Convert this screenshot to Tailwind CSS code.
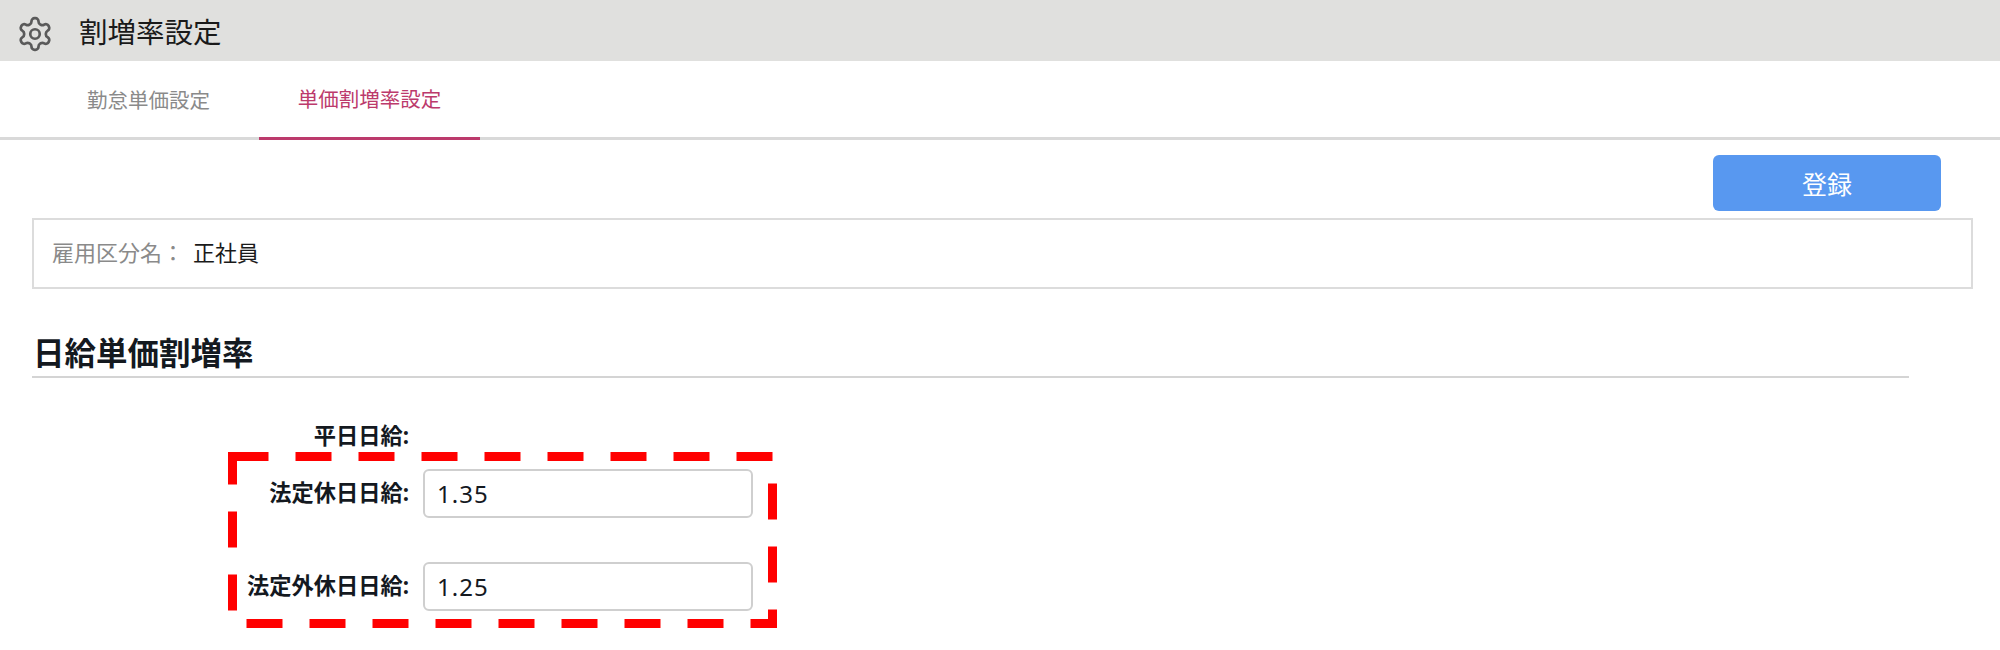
<!DOCTYPE html>
<html lang="ja">
<head>
    <meta charset="UTF-8">
    <title>割増率設定</title>
    <script src="https://cdn.jsdelivr.net/npm/@tailwindcss/browser@4"></script>
</head>
<body class="relative h-[650px] w-[2000px] overflow-hidden bg-white font-['Noto_Sans','Noto_Sans_CJK_JP',sans-serif]">

    <!-- Header -->
    <div class="flex h-[61px] items-center bg-[#e0e0de] pl-[16px]">
        <svg class="mt-[6px] h-[38px] w-[38px] text-[#5a5a5a]" viewBox="0 0 24 24" fill="none" stroke="currentColor" stroke-width="1.7" stroke-linecap="round" stroke-linejoin="round">
            <path d="M12.22 2h-.44a2 2 0 0 0-2 2v.18a2 2 0 0 1-1 1.73l-.43.25a2 2 0 0 1-2 0l-.15-.08a2 2 0 0 0-2.73.73l-.22.38a2 2 0 0 0 .73 2.73l.15.1a2 2 0 0 1 1 1.72v.51a2 2 0 0 1-1 1.74l-.15.09a2 2 0 0 0-.73 2.73l.22.38a2 2 0 0 0 2.73.73l.15-.08a2 2 0 0 1 2 0l.43.25a2 2 0 0 1 1 1.73V20a2 2 0 0 0 2 2h.44a2 2 0 0 0 2-2v-.18a2 2 0 0 1 1-1.73l.43-.25a2 2 0 0 1 2 0l.15.08a2 2 0 0 0 2.73-.73l.22-.39a2 2 0 0 0-.73-2.73l-.15-.08a2 2 0 0 1-1-1.74v-.5a2 2 0 0 1 1-1.74l.15-.09a2 2 0 0 0 .73-2.73l-.22-.38a2 2 0 0 0-2.73-.73l-.15.08a2 2 0 0 1-2 0l-.43-.25a2 2 0 0 1-1-1.73V4a2 2 0 0 0-2-2z"/>
            <circle cx="12" cy="12" r="3"/>
        </svg>
        <h1 class="mt-[4px] ml-[25px] text-[28.5px] leading-none text-[#1a1a1a]">割増率設定</h1>
    </div>

    <!-- Tabs -->
    <div class="flex h-[79px] border-b-[3px] border-[#d9d9d9] pl-[65px]">
        <div class="flex h-[79px] w-[194px] items-center pl-[22px] text-[20.5px] text-[#8a8a8a]">勤怠単価設定</div>
        <div class="flex h-[79px] w-[221px] items-center justify-center border-b-[3px] border-[#bc3a6c] text-[20.5px] text-[#bc3a6c]">単価割増率設定</div>
    </div>

    <!-- Actions -->
    <div class="flex justify-end pt-[15px] pr-[59px]">
        <button class="h-[56px] w-[228px] rounded-[6px] bg-[#5898f0] pt-[3px] text-[25px] text-white">登録</button>
    </div>

    <!-- Employment type -->
    <div class="mt-[7px] ml-[32px] flex h-[71px] w-[1941px] items-center border-2 border-[#dcdcdc] pb-[2px] pl-[18px] text-[22px]">
        <span class="text-[#8a8a8a]">雇用区分名：</span>
        <span class="ml-[9px] text-[#1a1a1a]">正社員</span>
    </div>

    <!-- Section -->
    <div class="mt-[43px] ml-[32px] w-[1877px] border-b-2 border-[#d4d4d4] pb-[3px] pl-[1px]">
        <h2 class="text-[31.5px] leading-[41px] font-bold text-[#14191f]">日給単価割増率</h2>
    </div>

    <!-- Form -->
    <div class="mt-[43px] text-[22.25px] font-bold text-[#14191f]">
        <div class="flex h-[32px] items-center">
            <label class="w-[409px] pb-[2px] text-right">平日日給:</label>
        </div>
        <div class="mt-[16px] flex items-center gap-[14px]">
            <label class="w-[409px] pb-[2px] text-right">法定休日日給:</label>
            <input class="h-[49px] w-[330px] rounded-[6px] border-2 border-[#cfcfcf] px-[12px] text-[24px] font-normal tracking-[1px] text-[#14191f]" value="1.35">
        </div>
        <div class="mt-[44px] flex items-center gap-[14px]">
            <label class="w-[409px] pb-[2px] text-right">法定外休日日給:</label>
            <input class="h-[49px] w-[330px] rounded-[6px] border-2 border-[#cfcfcf] px-[12px] text-[24px] font-normal tracking-[1px] text-[#14191f]" value="1.25">
        </div>
    </div>

    <!-- Red dashed annotation drawn over the form -->
    <svg class="absolute top-[452px] left-[228px] h-[176px] w-[549px]" viewBox="228 452 549 176" fill="none">
        <rect x="232.5" y="456.5" width="540" height="167" stroke="#ff0000" stroke-width="9" stroke-dasharray="36 27"/>
    </svg>

</body>
</html>
